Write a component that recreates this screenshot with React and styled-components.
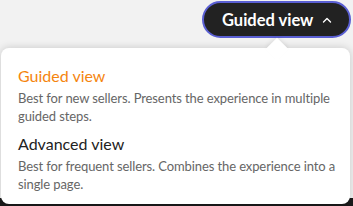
import React from 'react';
import styled, { createGlobalStyle } from 'styled-components';

const Global = createGlobalStyle`
  html, body {
    margin: 0;
    padding: 0;
    background: #f2f2f2;
    font-family: Lato, 'Open Sans', sans-serif;
  }
`

const Page = styled.div`
  position: relative;
  width: 353px;
  height: 206px;
  overflow: hidden;
  background: #f2f2f2;
`
const Header = styled.div`
  display: flex;
  justify-content: flex-end;
  padding: 1px 2px 0 0;
`
const Toggle = styled.button`
  display: flex;
  align-items: center;
  gap: 8px;
  width: 149px;
  height: 37px;
  box-sizing: border-box;
  padding: 0 0 0 18px;
  background: #222;
  color: #fff;
  border: 2px solid #5a5fd3;
  border-radius: 19px;
  font-family: Lato, sans-serif;
  font-size: 16.5px;
  font-weight: 700;
  cursor: pointer;
`
const Below = styled.div`
  position: absolute;
  left: 0;
  right: 0;
  bottom: 0;
  height: 8px;
  background: #1a1a1a;
`
const Popover = styled.div`
  position: absolute;
  left: 1px;
  top: 48px;
  width: 349px;
  height: 156px;
  box-sizing: border-box;
  padding: 16px 10px 0 17px;
  background: #fff;
  border-radius: 8px;
  box-shadow: 0 0 8px rgba(0, 0, 0, 0.18);
  z-index: 2;
  &::before {
    content: '';
    position: absolute;
    top: -7px;
    left: 268px;
    width: 16px;
    height: 16px;
    background: #fff;
    transform: rotate(45deg);
    box-shadow: -2px -2px 4px rgba(0, 0, 0, 0.06);
  }
`
const Option = styled.div`
  position: relative;
  margin-bottom: 7px;
`
const Title = styled.div`
  font-size: 16px;
  line-height: 24px;
  color: ${p => (p.active ? '#f5850f' : '#222')};
`
const Desc = styled.div`
  font-size: 13px;
  letter-spacing: -0.1px;
  line-height: 18px;
  margin-top: 1px;
  color: #666;
`

const Chevron = () => (
  <svg width="12" height="12" viewBox="0 0 12 12" fill="none">
    <path d="M2.5 8 L6 4.5 L9.5 8" stroke="#fff" strokeWidth="1.4" strokeLinecap="round" strokeLinejoin="round" />
  </svg>
)

const App = () => (
  <Page>
    <Global />
    <Header>
      <Toggle>
        Guided view
        <Chevron />
      </Toggle>
    </Header>
    <Popover>
      <Option>
        <Title active>Guided view</Title>
        <Desc>Best for new sellers. Presents the experience in multiple guided steps.</Desc>
      </Option>
      <Option>
        <Title>Advanced view</Title>
        <Desc>Best for frequent sellers. Combines the experience into a single page.</Desc>
      </Option>
    </Popover>
    <Below />
  </Page>
)

export default App;
